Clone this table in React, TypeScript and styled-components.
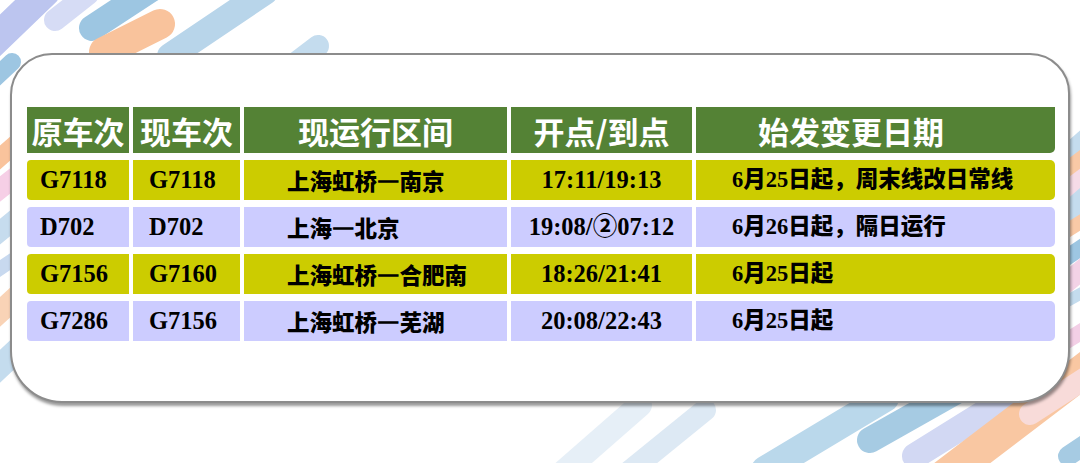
import React from "react"
import styled, { createGlobalStyle } from "styled-components"

const GlobalStyle = createGlobalStyle`
  html, body {
    margin: 0;
    padding: 0;
    background: #ffffff;
  }
  #root {
    width: 1080px;
    height: 463px;
  }
`

const colors = {
  green: "#548235",
  yellow: "#cccc00",
  purple: "#ccccff",
}

type Tone = "yellow" | "purple"
type Kind = "code" | "cjk" | "mixed"

const Page = styled.div`
  position: relative;
  width: 1080px;
  height: 463px;
  overflow: hidden;
  background: #ffffff;
  padding-top: 53px;
  box-sizing: border-box;
`

const Backdrop = styled.svg`
  position: absolute;
  inset: 0;
  width: 1080px;
  height: 463px;
  z-index: 0;
`

const Card = styled.div`
  position: relative;
  z-index: 1;
  margin: 0 10px;
  height: 350px;
  box-sizing: border-box;
  background: #ffffff;
  border: 2px solid #8c8c8c;
  border-radius: 42px 40px 52px 52px;
  box-shadow: 1px 3px 3px rgba(0, 0, 0, 0.4);
  padding: 52px 13px 0 15px;
`

const Table = styled.div`
  display: grid;
  grid-template-columns: 102px 107px 263px 181px 359px;
  grid-template-rows: 46px repeat(4, 40px);
  column-gap: 4px;
  row-gap: 7px;
`

const HeadCell = styled.div<{ $left?: number; $last?: boolean }>`
  display: flex;
  align-items: center;
  justify-content: ${(p) => (p.$left ? "flex-start" : "center")};
  padding-left: ${(p) => p.$left || 0}px;
  background: ${colors.green};
  color: #ffffff;
  font-family: "Noto Sans CJK SC", "Noto Sans", sans-serif;
  font-weight: 700;
  font-size: 31px;
  line-height: 1;
  white-space: nowrap;
  border-bottom-right-radius: ${(p) => (p.$last ? "5px" : "0")};
`

const Cell = styled.div<{
  $tone: Tone
  $kind: Kind
  $pad?: number
  $first?: boolean
  $last?: boolean
}>`
  display: flex;
  align-items: center;
  justify-content: ${(p) => (p.$pad === undefined ? "center" : "flex-start")};
  padding-left: ${(p) => p.$pad || 0}px;
  background: ${(p) => colors[p.$tone]};
  color: #000000;
  font-weight: ${(p) => (p.$kind === "code" ? 700 : 900)};
  line-height: 1;
  white-space: nowrap;
  font-family: ${(p) =>
    p.$kind === "cjk"
      ? `"Noto Sans CJK SC", sans-serif`
      : `"Liberation Serif", "Noto Sans CJK SC", serif`};
  font-size: ${(p) => (p.$kind === "code" ? "24.5px" : "22.5px")};
  border-radius: ${(p) =>
    p.$first ? "4px 0 0 4px" : p.$last ? "0 5px 5px 0" : "0"};
`

// the route separator is a heavy full-width dash in the original
const Dash = styled.span`
  font-feature-settings: "fwid" 1;
  -webkit-text-stroke: 1.3px #000000;
`

const RouteText = ({ text }: { text: string }) => {
  const [a, b] = text.split("—")
  return (
    <>
      {a}
      <Dash>—</Dash>
      {b}
    </>
  )
}

type Row = {
  tone: Tone
  from: string
  to: string
  route: string
  time: string
  date: string
}

const rows: Row[] = [
  {
    tone: "yellow",
    from: "G7118",
    to: "G7118",
    route: "上海虹桥—南京",
    time: "17:11/19:13",
    date: "6月25日起，周末线改日常线",
  },
  {
    tone: "purple",
    from: "D702",
    to: "D702",
    route: "上海—北京",
    time: "19:08/②07:12",
    date: "6月26日起，隔日运行",
  },
  {
    tone: "yellow",
    from: "G7156",
    to: "G7160",
    route: "上海虹桥—合肥南",
    time: "18:26/21:41",
    date: "6月25日起",
  },
  {
    tone: "purple",
    from: "G7286",
    to: "G7156",
    route: "上海虹桥—芜湖",
    time: "20:08/22:43",
    date: "6月25日起",
  },
]

// decorative brush strokes peeking out around the card
const strokes: [number, number, number, number, number, string][] = [
  [-10, 45, 45, -8, 30, "#bcc5ef"],
  [55, 20, 88, -6, 22, "#d6dcf5"],
  [92, 28, 150, -10, 26, "#9dc6e2"],
  [104, 52, 160, 24, 30, "#f9c39c"],
  [170, 56, 265, -8, 26, "#b8d5ea"],
  [297, 62, 318, 46, 22, "#c4dcee"],
  [-20, 92, 12, 62, 18, "#9dc6e2"],
  [-20, 175, 20, 140, 18, "#f9c39c"],
  [-20, 205, 24, 170, 20, "#f6cfe6"],
  [-20, 248, 24, 212, 20, "#c6dcee"],
  [-20, 282, 20, 255, 14, "#c8d9ef"],
  [-20, 330, 24, 290, 22, "#f9d3b6"],
  [-20, 385, 28, 340, 24, "#c4dcee"],
  [1060, 160, 1100, 125, 18, "#c4dcee"],
  [1060, 175, 1100, 145, 16, "#f9c9a6"],
  [1060, 195, 1100, 165, 18, "#f6dbe8"],
  [1060, 220, 1100, 185, 22, "#c4dcee"],
  [1060, 235, 1100, 210, 14, "#f9c9a6"],
  [1060, 262, 1100, 235, 16, "#9dc6e2"],
  [1060, 288, 1100, 255, 20, "#f3d2e6"],
  [1060, 305, 1100, 283, 12, "#c4dcee"],
  [1060, 345, 1100, 320, 16, "#f3cfe6"],
  [1060, 375, 1100, 352, 14, "#f9c9a6"],
  [560, 475, 640, 405, 24, "#e6eff7"],
  [625, 475, 705, 410, 22, "#dde9f4"],
  [765, 470, 885, 398, 28, "#bad8eb"],
  [870, 440, 955, 392, 26, "#a6cbe3"],
  [915, 456, 1005, 400, 26, "#d2d8f3"],
  [940, 480, 1095, 362, 34, "#f9c7a2"],
  [1030, 414, 1095, 372, 22, "#f8dbd9"],
  [1068, 456, 1095, 438, 20, "#a6cbe3"],
]

const Strokes = () => (
  <Backdrop viewBox="0 0 1080 463">
    {strokes.map(([x1, y1, x2, y2, w, c], i) => (
      <line
        key={i}
        x1={x1}
        y1={y1}
        x2={x2}
        y2={y2}
        stroke={c}
        strokeWidth={w}
        strokeLinecap="round"
      />
    ))}
  </Backdrop>
)

export default function App() {
  return (
    <>
      <GlobalStyle />
      <Page>
        <Strokes />
        <Card>
          <Table>
            <HeadCell>原车次</HeadCell>
            <HeadCell>现车次</HeadCell>
            <HeadCell>现运行区间</HeadCell>
            <HeadCell>开点/到点</HeadCell>
            <HeadCell $left={62} $last>
              始发变更日期
            </HeadCell>

            {rows.map((r) => (
              <React.Fragment key={r.from + r.to}>
                <Cell $tone={r.tone} $kind="code" $pad={13} $first>
                  {r.from}
                </Cell>
                <Cell $tone={r.tone} $kind="code" $pad={16}>
                  {r.to}
                </Cell>
                <Cell $tone={r.tone} $kind="cjk" $pad={43}>
                  <RouteText text={r.route} />
                </Cell>
                <Cell $tone={r.tone} $kind="code">
                  {r.time}
                </Cell>
                <Cell $tone={r.tone} $kind="mixed" $pad={36} $last>
                  {r.date}
                </Cell>
              </React.Fragment>
            ))}
          </Table>
        </Card>
      </Page>
    </>
  )
}
